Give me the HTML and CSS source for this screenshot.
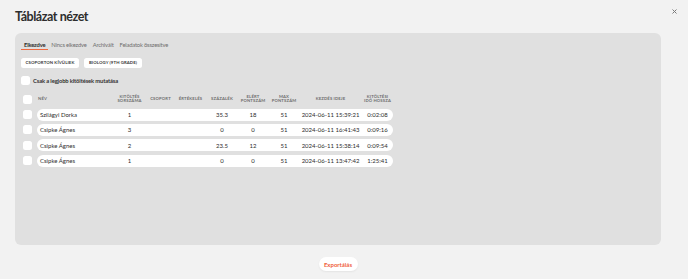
FILE: index.html
```html
<!DOCTYPE html>
<html lang="hu">
<head>
<meta charset="utf-8">
<title>Táblázat nézet</title>
<link rel="stylesheet" href="styles.css">
</head>
<body>
<div class="page">
  <header class="top">
    <h1 class="title">Táblázat nézet</h1>
    <button class="close" aria-label="Bezárás">
      <svg width="5" height="5" viewBox="0 0 5 5"><path d="M0.5 0.5L4.5 4.5M4.5 0.5L0.5 4.5" stroke="#7a7a7a" stroke-width="1" fill="none"/></svg>
    </button>
  </header>

  <section class="panel">
    <nav class="tabs">
      <span class="tab active">Elkezdve</span>
      <span class="tab">Nincs elkezdve</span>
      <span class="tab">Archivált</span>
      <span class="tab">Feladatok összesítve</span>
    </nav>

    <div class="chips">
      <span class="chip">Csoporton kívüliek</span>
      <span class="chip">Biology (9th grade)</span>
    </div>

    <label class="best">
      <span class="box"></span>
      <span class="best-label">Csak a legjobb kitöltések mutatása</span>
    </label>

    <div class="table">
      <div class="trow head">
        <span class="box"></span>
        <div class="cells">
          <span class="c name">Név</span>
          <span class="c">Kitöltés<br>sorszáma</span>
          <span class="c">Csoport</span>
          <span class="c">Értékelés</span>
          <span class="c">Százalék</span>
          <span class="c">Elért<br>pontszám</span>
          <span class="c">Max<br>pontszám</span>
          <span class="c">Kezdés ideje</span>
          <span class="c">Kitöltési<br>idő hossza</span>
        </div>
      </div>

      <div class="trow">
        <span class="box"></span>
        <div class="cells pill">
          <span class="c name">Szilágyi Dorka</span>
          <span class="c">1</span>
          <span class="c"></span>
          <span class="c"></span>
          <span class="c">35.3</span>
          <span class="c">18</span>
          <span class="c">51</span>
          <span class="c">2024-06-11 15:39:21</span>
          <span class="c">0:02:08</span>
        </div>
      </div>

      <div class="trow">
        <span class="box"></span>
        <div class="cells pill">
          <span class="c name">Csipke Ágnes</span>
          <span class="c">3</span>
          <span class="c"></span>
          <span class="c"></span>
          <span class="c">0</span>
          <span class="c">0</span>
          <span class="c">51</span>
          <span class="c">2024-06-11 16:41:43</span>
          <span class="c">0:09:16</span>
        </div>
      </div>

      <div class="trow">
        <span class="box"></span>
        <div class="cells pill">
          <span class="c name">Csipke Ágnes</span>
          <span class="c">2</span>
          <span class="c"></span>
          <span class="c"></span>
          <span class="c">23.5</span>
          <span class="c">12</span>
          <span class="c">51</span>
          <span class="c">2024-06-11 15:38:14</span>
          <span class="c">0:09:54</span>
        </div>
      </div>

      <div class="trow">
        <span class="box"></span>
        <div class="cells pill">
          <span class="c name">Csipke Ágnes</span>
          <span class="c">1</span>
          <span class="c"></span>
          <span class="c"></span>
          <span class="c">0</span>
          <span class="c">0</span>
          <span class="c">51</span>
          <span class="c">2024-06-11 13:47:42</span>
          <span class="c">1:25:41</span>
        </div>
      </div>
    </div>
  </section>

  <div class="footer">
    <button class="export">Exportálás</button>
  </div>
</div>
</body>
</html>
```

FILE: styles.css
```css
* { box-sizing: border-box; }

html, body {
  margin: 0;
  padding: 0;
  background: #f2f2f2;
}

body {
  font-family: Lato, "Noto Sans", sans-serif;
  color: #333;
  width: 688px;
  height: 279px;
  overflow: hidden;
}

.top {
  display: flex;
  justify-content: space-between;
  align-items: flex-start;
  padding: 9px 11px 0 15px;
}

.title {
  margin: 0;
  font-size: 12.5px;
  line-height: 16px;
  font-weight: 700;
  letter-spacing: -0.45px;
  color: #2d2d2d;
}

.close {
  border: 0;
  background: none;
  padding: 0;
  margin-top: 0;
  width: 5px;
  height: 5px;
  display: flex;
}

.panel {
  margin: 8px 27px 0 15px;
  height: 212px;
  background: #e0e0e0;
  border-radius: 6px;
  padding: 8px 6px 0 6px;
}

.tabs {
  display: flex;
}

.tab {
  font-size: 5.8px;
  line-height: 8px;
  padding: 0 3px;
  color: #6f6f6f;
  letter-spacing: -0.18px;
  border-bottom: 1px solid transparent;
}

.tab.active {
  color: #2d2d2d;
  font-weight: 700;
  border-bottom-color: #ef6a40;
}

.chips {
  display: flex;
  gap: 5px;
  margin-top: 8px;
}

.chip {
  background: #fff;
  border-radius: 2.5px;
  height: 9.5px;
  width: 58px;
  display: flex;
  align-items: center;
  justify-content: center;
  font-size: 4.3px;
  font-weight: 700;
  text-transform: uppercase;
  color: #3a3a3a;
  letter-spacing: 0.1px;
  white-space: nowrap;
}

.best {
  display: flex;
  align-items: center;
  gap: 3px;
  margin-top: 8px;
}

.box {
  width: 9px;
  height: 9px;
  flex: none;
  background: #fff;
  border-radius: 2.5px;
}

.best-label {
  font-size: 5.8px;
  font-weight: 700;
  letter-spacing: -0.12px;
  color: #333;
}

.table {
  margin-top: 9.5px;
  display: flex;
  flex-direction: column;
  gap: 3.33px;
  padding-left: 2px;
}

.trow {
  display: flex;
  align-items: center;
  gap: 5px;
  height: 12px;
}

.trow.head {
  height: 10px;
  margin-bottom: 1.2px;
}

.cells {
  width: 356px;
  height: 100%;
  display: grid;
  grid-template-columns: 75px 35px 27px 33px 30px 32px 30px 63px 31px;
  align-items: center;
}

.pill {
  background: #fff;
  border-radius: 6px;
}

.c {
  text-align: center;
  font-size: 6px;
  line-height: 7px;
  white-space: nowrap;
  color: #2d2d2d;
}

.c.name {
  text-align: left;
  padding-left: 3px;
}

.head .c {
  font-size: 4.2px;
  line-height: 4.5px;
  text-transform: uppercase;
  font-weight: 700;
  color: #6e6e6e;
  letter-spacing: 0.15px;
}

.head .c.name {
  padding-left: 1px;
}

.footer {
  margin: 12px 27px 0 15px;
  display: flex;
  justify-content: center;
}

.export {
  border: 0;
  background: #fff;
  border-radius: 7px;
  height: 14px;
  width: 39px;
  padding: 0;
  font-family: Lato, "Noto Sans", sans-serif;
  font-size: 6px;
  font-weight: 700;
  color: #f0603c;
  box-shadow: 0 1px 2px rgba(0, 0, 0, 0.06);
}
```
